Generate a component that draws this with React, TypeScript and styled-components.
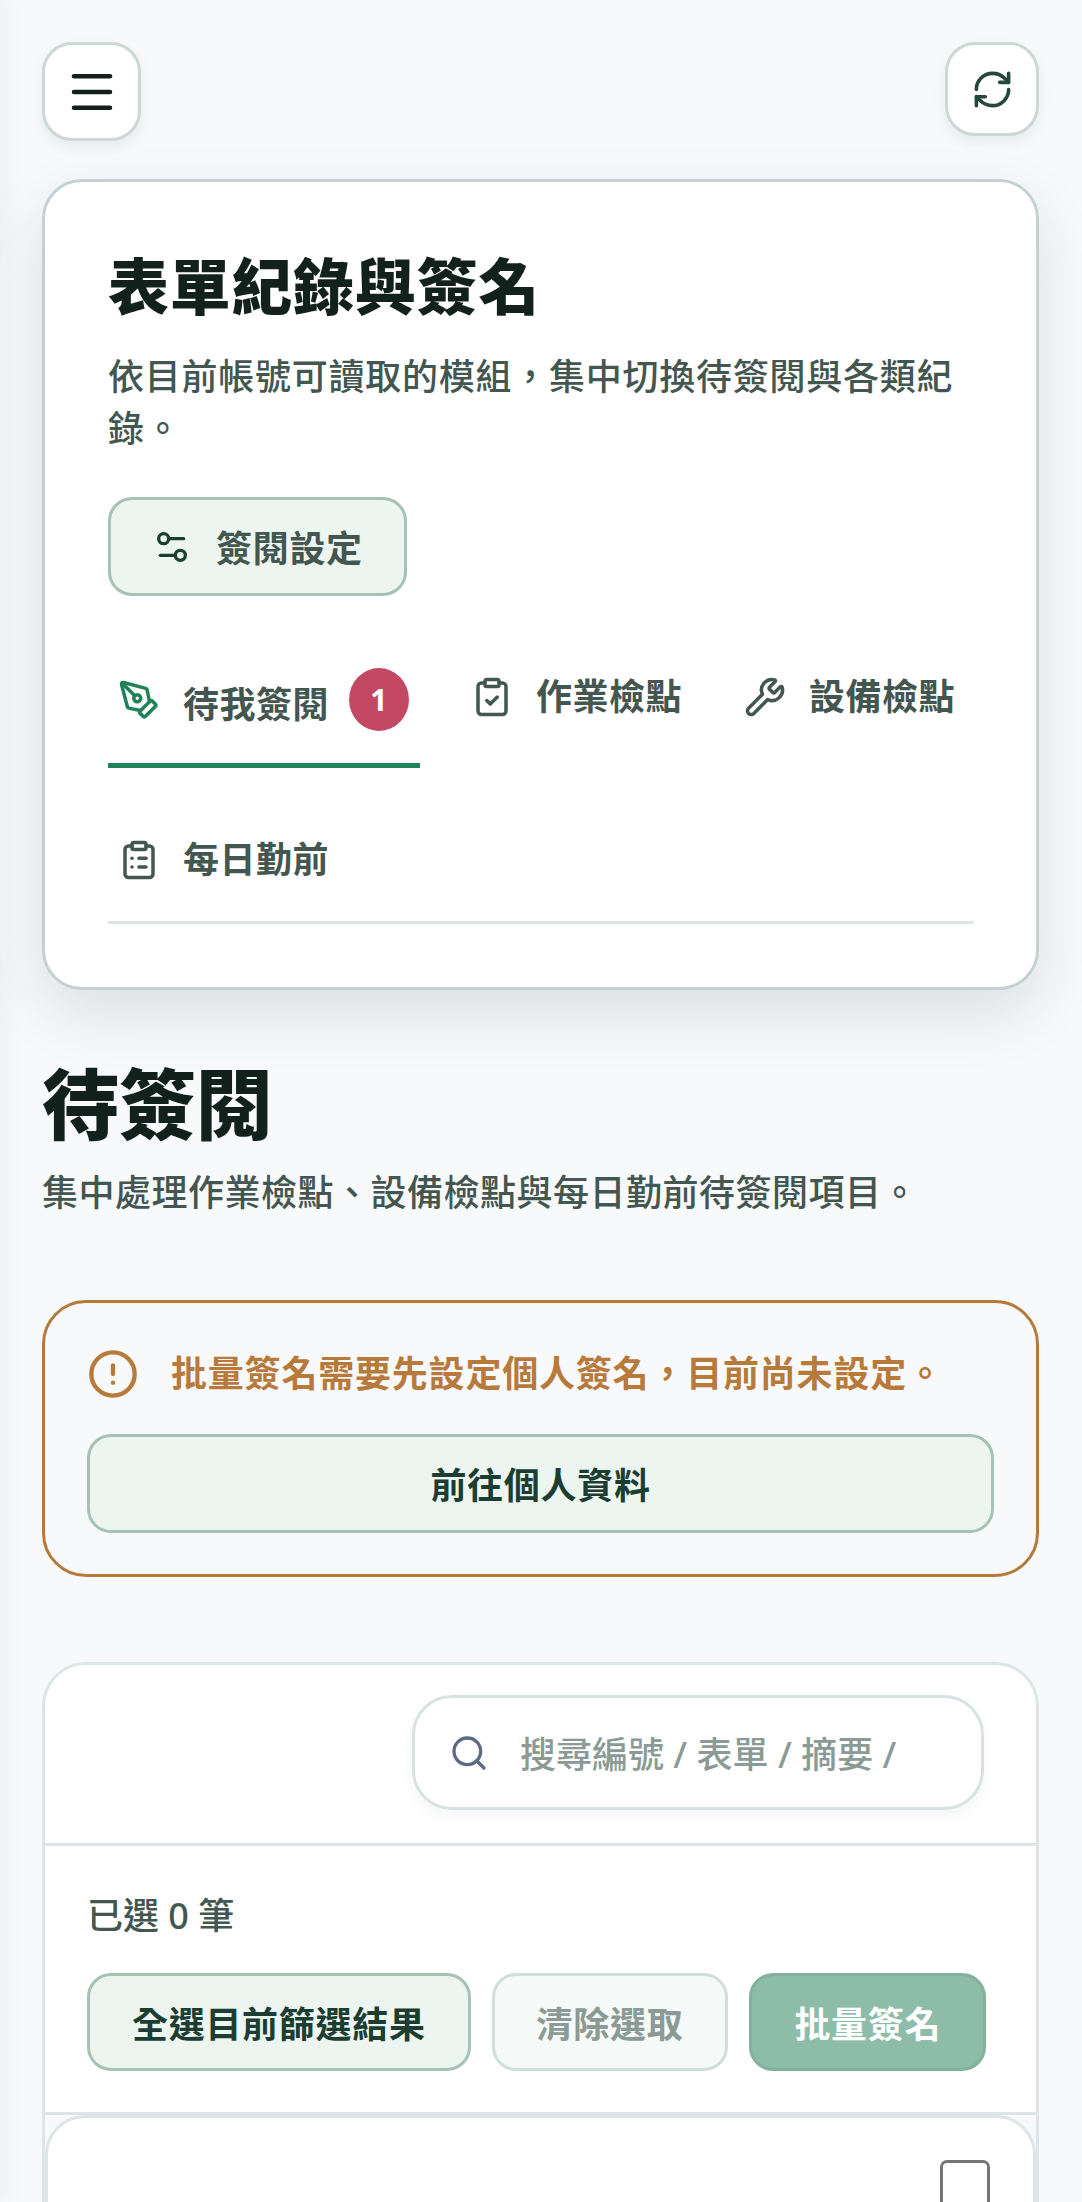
import React from 'react';
import styled, { createGlobalStyle } from 'styled-components';
import {
  CircleAlert,
  ClipboardCheck,
  ClipboardList,
  Menu,
  PenTool,
  RefreshCw,
  Search,
  Settings2,
  Wrench,
} from 'lucide-react';

const GlobalStyle = createGlobalStyle`
  * {
    box-sizing: border-box;
  }

  html,
  body {
    margin: 0;
    height: 2202px;
    overflow: hidden;
    background-color: #f7f9fb;
  }

  body {
    font-family: 'Noto Sans', 'Noto Sans CJK TC', sans-serif;
    font-size: 36px;
    color: #13211c;
  }
`;

const Page = styled.div`
  position: relative;
  height: 2202px;
  padding: 42px 43px 0 42px;
  overflow: hidden;
`;

// closed drawer, only its shadow reaches into the page
const DrawerShadow = styled.div`
  position: absolute;
  top: 0;
  left: -20px;
  width: 20px;
  height: 100%;
  box-shadow: 0 0 26px rgba(40, 60, 60, 0.08);
`;

const TopBar = styled.div`
  display: flex;
  justify-content: space-between;
  align-items: flex-start;
`;

const IconButton = styled.button<{ $w: number; $h: number; $color: string }>`
  display: flex;
  align-items: center;
  justify-content: center;
  width: ${(p) => p.$w}px;
  height: ${(p) => p.$h}px;
  padding: 0;
  color: ${(p) => p.$color};
  background-color: #fff;
  border: 3px solid #cbd8d4;
  border-radius: 30px;
  box-shadow: 0 6px 14px rgba(30, 50, 50, 0.07);
`;

const HeroCard = styled.section`
  margin-top: 38px;
  padding: 66px 63px 63px;
  background-color: #fff;
  border: 3px solid #c5d1d1;
  border-radius: 40px;
  box-shadow: 0 24px 60px rgba(30, 50, 50, 0.12);
`;

const HeroTitle = styled.h1`
  margin: 0;
  font-size: 61px;
  line-height: 78px;
  font-weight: 900;
  letter-spacing: 0.7px;
  color: #13211c;
`;

const HeroText = styled.p`
  margin: 25px 0 0;
  font-weight: 500;
  line-height: 52px;
  letter-spacing: 0.75px;
  color: #43564f;
`;

const SoftButton = styled.button<{ $color?: string; $full?: boolean }>`
  display: flex;
  align-items: center;
  justify-content: center;
  gap: 24px;
  width: ${(p) => (p.$full ? '100%' : 'auto')};
  height: 99px;
  padding: 0 41px;
  font-family: inherit;
  font-size: 36px;
  font-weight: 700;
  letter-spacing: 0.7px;
  white-space: nowrap;
  color: ${(p) => p.$color || '#1c3d32'};
  background-color: #edf5f0;
  border: 3px solid #a6c2b4;
  border-radius: 24px;
`;

const SettingsButton = styled(SoftButton)`
  margin-top: 42px;

  svg {
    color: #1c3d32;
  }
`;

const Tabs = styled.div`
  display: flex;
  flex-wrap: wrap;
  align-items: flex-start;
  gap: 36px 41px;
  margin-top: 40px;
  border-bottom: 3px solid #dde4e5;
`;

const Tab = styled.div<{ $active?: boolean }>`
  display: flex;
  align-items: center;
  gap: 23px;
  margin-bottom: -5px;
  padding: 32px 11px 32px 10px;
  font-weight: 700;
  line-height: 58px;
  letter-spacing: 0.5px;
  white-space: nowrap;
  color: #43564f;
  border-bottom: 5px solid ${(p) => (p.$active ? '#1f8259' : 'transparent')};

  svg {
    color: ${(p) => (p.$active ? '#1f8259' : '#43564f')};
  }
`;

const BadgedLabel = styled.span`
  margin-bottom: -5px;
  padding-top: 5px;
`;

const Badge = styled.span`
  display: flex;
  align-items: center;
  justify-content: center;
  width: 60px;
  height: 63px;
  margin-left: -3px;
  font-size: 30px;
  line-height: 1;
  color: #fff;
  background-color: #c24864;
  border-radius: 50%;
`;

const PageTitle = styled.h2`
  margin: 65px 0 0;
  font-size: 77px;
  line-height: 100px;
  font-weight: 900;
  color: #13211c;
`;

const PageText = styled.p`
  margin: 12px 0 0;
  font-weight: 500;
  line-height: 52px;
  letter-spacing: 0.5px;
  color: #43564f;
`;

const Warning = styled.section`
  margin-top: 81px;
  padding: 42px 42px 41px;
  border: 3px solid #b57a3a;
  border-radius: 44px;
`;

const WarningRow = styled.div`
  display: flex;
  align-items: center;
  gap: 32px;
  margin-bottom: 31px;
  font-weight: 700;
  line-height: 58px;
  letter-spacing: 0.8px;
  white-space: nowrap;
  color: #b87a3b;
`;

const Panel = styled.section`
  margin-top: 85px;
  background-color: #fff;
  border: 3px solid #dde5e6;
  border-radius: 44px;
`;

const SearchRow = styled.div`
  display: flex;
  justify-content: flex-end;
  padding: 30px 52px 33px 42px;
  border-bottom: 3px solid #dde5e6;
`;

const SearchBox = styled.label`
  display: flex;
  align-items: center;
  gap: 31px;
  width: 572px;
  height: 115px;
  padding: 0 34px;
  background-color: #fff;
  border: 3px solid #d9e2e2;
  border-radius: 40px;
  box-shadow: 0 6px 14px rgba(30, 50, 50, 0.05);

  svg {
    flex: none;
    color: #5d6a85;
  }
`;

const SearchInput = styled.input`
  flex: 1;
  min-width: 0;
  padding: 4px 0 0;
  font-family: inherit;
  font-size: 36px;
  font-weight: 500;
  background: none;
  border: 0;
  outline: 0;

  &::placeholder {
    color: #8b9a94;
    opacity: 1;
  }
`;

const Selection = styled.div`
  padding: 41px 52px 41px 42px;
  border-bottom: 3px solid #dde5e6;
`;

const SelectedCount = styled.div`
  font-weight: 500;
  line-height: 58px;
  color: #43564f;
`;

const Actions = styled.div`
  display: flex;
  gap: 21px;
  margin-top: 28px;

  button {
    height: 98px;
    padding: 0 42px;
  }
`;

const ClearButton = styled(SoftButton)`
  color: #8b9a94;
  background-color: #f5f9f7;
  border-color: #d0dfd9;
`;

const SignButton = styled(SoftButton)`
  color: #fff;
  background-color: #8dbca9;
  border-color: #84b09e;
`;

const List = styled.div`
  background-color: #f7f9fa;
  border-radius: 0 0 42px 42px;
`;

const RecordCard = styled.article`
  display: flex;
  justify-content: flex-end;
  min-height: 300px;
  padding: 42px 43px;
  background-color: #fff;
  border: 3px solid #dde5e6;
  border-radius: 40px;
`;

const Checkbox = styled.input`
  width: 50px;
  height: 50px;
  margin: 0;
  appearance: none;
  background-color: #fff;
  border: 3px solid #767676;
  border-radius: 7px;
`;

const App: React.FC = () => {
  return (
    <Page>
      <GlobalStyle />
      <DrawerShadow />
      <TopBar>
        <IconButton $w={99} $h={99} $color="#13211c">
          <Menu size={54} strokeWidth={2} />
        </IconButton>
        <IconButton $w={94} $h={94} $color="#25483c">
          <RefreshCw size={43} strokeWidth={2} />
        </IconButton>
      </TopBar>

      <HeroCard>
        <HeroTitle>表單紀錄與簽名</HeroTitle>
        <HeroText>依目前帳號可讀取的模組，集中切換待簽閱與各類紀錄。</HeroText>
        <SettingsButton $color="#43564f">
          <Settings2 size={40} strokeWidth={2} />
          簽閱設定
        </SettingsButton>
        <Tabs>
          <Tab $active>
            <PenTool size={42} strokeWidth={2} />
            <BadgedLabel>待我簽閱</BadgedLabel>
            <Badge>1</Badge>
          </Tab>
          <Tab>
            <ClipboardCheck size={42} strokeWidth={2} />
            作業檢點
          </Tab>
          <Tab>
            <Wrench size={42} strokeWidth={2} />
            設備檢點
          </Tab>
          <Tab>
            <ClipboardList size={42} strokeWidth={2} />
            每日勤前
          </Tab>
        </Tabs>
      </HeroCard>

      <PageTitle>待簽閱</PageTitle>
      <PageText>集中處理作業檢點、設備檢點與每日勤前待簽閱項目。</PageText>

      <Warning>
        <WarningRow>
          <CircleAlert size={52} strokeWidth={2} />
          批量簽名需要先設定個人簽名，目前尚未設定。
        </WarningRow>
        <SoftButton $full>前往個人資料</SoftButton>
      </Warning>

      <Panel>
        <SearchRow>
          <SearchBox>
            <Search size={40} strokeWidth={2} />
            <SearchInput placeholder="搜尋編號 / 表單 / 摘要 /" />
          </SearchBox>
        </SearchRow>
        <Selection>
          <SelectedCount>已選 0 筆</SelectedCount>
          <Actions>
            <SoftButton>全選目前篩選結果</SoftButton>
            <ClearButton>清除選取</ClearButton>
            <SignButton>批量簽名</SignButton>
          </Actions>
        </Selection>
        <List>
          <RecordCard>
            <Checkbox type="checkbox" />
          </RecordCard>
        </List>
      </Panel>
    </Page>
  );
};

export default App;
